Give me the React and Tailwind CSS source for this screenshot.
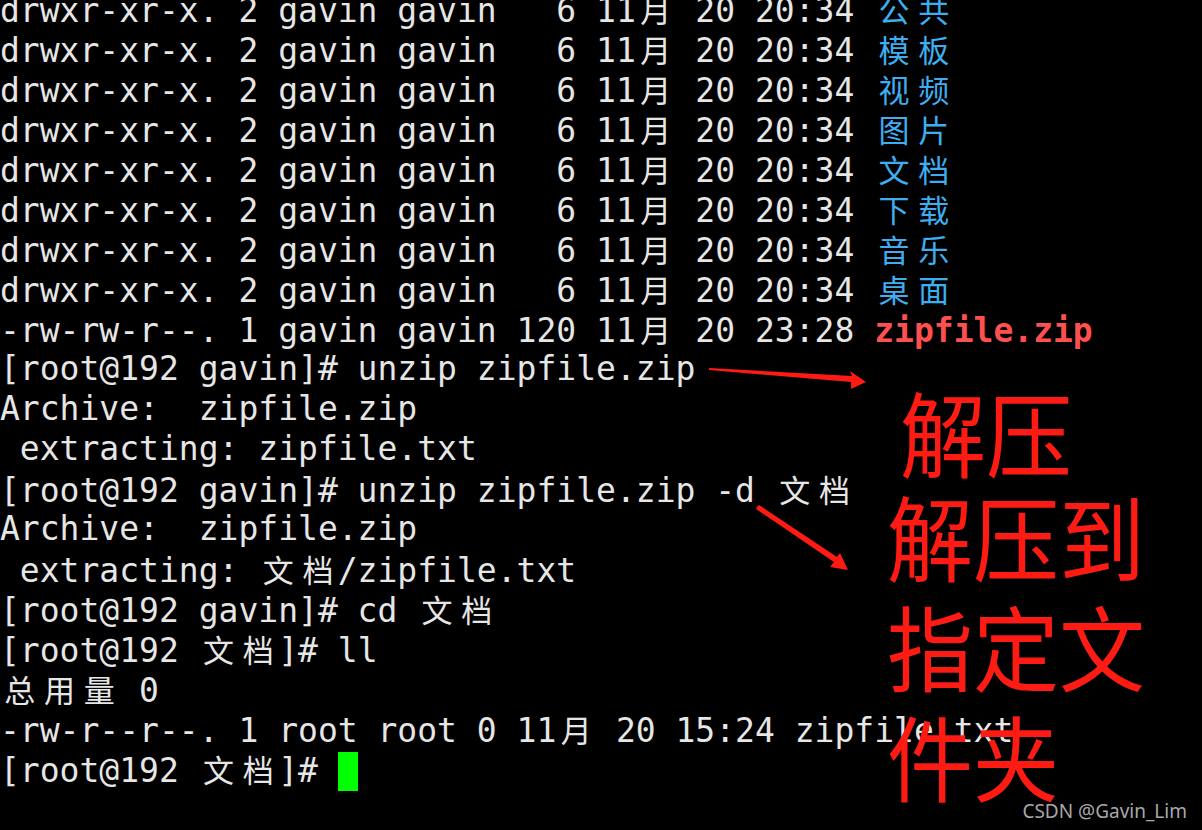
const mono = { fontFamily: '"DejaVu Sans Mono", "Liberation Mono", monospace' }

// a CJK char takes two terminal cells
const Wide = ({ text }) =>
  [...text].map((c, i) => (
    <span
      key={i}
      className="inline-block w-[39.74px] text-center text-[31px] font-['Noto_Sans_CJK_SC',sans-serif]"
    >
      {c}
    </span>
  ))

const dirs = ['公共', '模板', '视频', '图片', '文档', '下载', '音乐', '桌面']

const Line = ({ children }) => (
  <div className="h-[40px] leading-[40px] whitespace-pre">{children}</div>
)

export default function App() {
  return (
    <div className="relative w-[1202px] h-[830px] overflow-hidden bg-black">
      <div
        className="mt-[-11px] text-[33px] text-[#e6e6e6]"
        style={mono}
      >
        {dirs.map((d) => (
          <Line key={d}>
            {'drwxr-xr-x. 2 gavin gavin   6 11'}
            <Wide text="月" />
            {' 20 20:34 '}
            <span className="text-[#3eaef0]">
              <Wide text={d} />
            </span>
          </Line>
        ))}
        <Line>
          {'-rw-rw-r--. 1 gavin gavin 120 11'}
          <Wide text="月" />
          {' 20 23:28 '}
          <span className="font-bold text-[#ff5050]">zipfile.zip</span>
        </Line>
        <Line>[root@192 gavin]# unzip zipfile.zip</Line>
        <Line>{'Archive:  zipfile.zip'}</Line>
        <Line>{' extracting: zipfile.txt'}</Line>
        <Line>
          {'[root@192 gavin]# unzip zipfile.zip -d '}
          <Wide text="文档" />
        </Line>
        <Line>{'Archive:  zipfile.zip'}</Line>
        <Line>
          {' extracting: '}
          <Wide text="文档" />
          {'/zipfile.txt'}
        </Line>
        <Line>
          {'[root@192 gavin]# cd '}
          <Wide text="文档" />
        </Line>
        <Line>
          {'[root@192 '}
          <Wide text="文档" />
          {']# ll'}
        </Line>
        <Line>
          <Wide text="总用量" />
          {' 0'}
        </Line>
        <Line>
          {'-rw-r--r--. 1 root root 0 11'}
          <Wide text="月" />
          {' 20 15:24 zipfile.txt'}
        </Line>
        <Line>
          {'[root@192 '}
          <Wide text="文档" />
          {']# '}
          <span className="inline-block w-[20px] h-[39px] align-[-9px] bg-[#00ff00]" />
        </Line>
      </div>

      {/* annotations */}
      <svg className="absolute inset-0 pointer-events-none" width="1202" height="830">
        <polygon
          fill="#fe1b13"
          points="709,368 852,376 850,371 866,382 851,389 851,382 709,370"
        />
        <polygon
          fill="#fe1b13"
          points="757,507 759,505 837,557 840,553 848,570 830,567 834,562 756,509"
        />
      </svg>
      <div className="absolute left-[900px] top-[372px] text-[86px] leading-[110px] text-[#fe1b13] font-['Noto_Sans_CJK_SC',sans-serif] origin-top scale-y-[1.08]">
        解压
      </div>
      <div className="absolute left-[887px] top-[480px] text-[86px] leading-[110px] text-[#fe1b13] font-['Noto_Sans_CJK_SC',sans-serif]">
        <div className="scale-y-[1.08]">解压到</div>
        <div className="scale-y-[1.08]">指定文</div>
        <div className="scale-y-[1.08]">件夹</div>
      </div>
      <div className="absolute right-[15px] bottom-[5px] text-[19px] text-[#a8a8a8] font-['Noto_Sans',sans-serif]">
        CSDN @Gavin_Lim
      </div>
    </div>
  )
}
